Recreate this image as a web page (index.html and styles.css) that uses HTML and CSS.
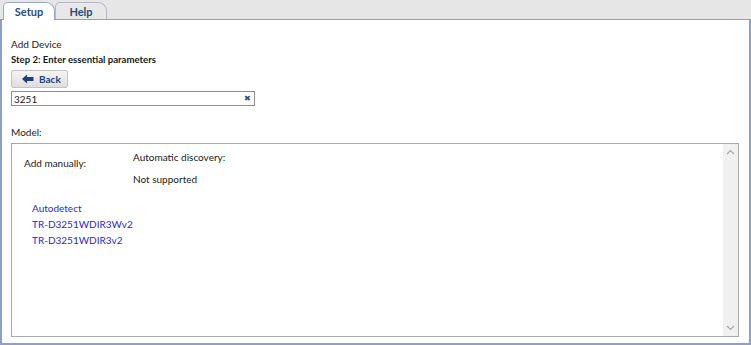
FILE: index.html
```html
<!DOCTYPE html>
<html lang="en">
<head>
    <meta charset="UTF-8">
    <title>Add Device</title>
    <link rel="stylesheet" href="styles.css">
</head>
<body>
    <div class="tabs">
        <div class="tab active">Setup</div>
        <div class="tab">Help</div>
    </div>
    <div class="panel">
        <div class="title">Add Device</div>
        <div class="step">Step 2: Enter essential parameters</div>
        <button class="back-btn" type="button">
            <svg width="12" height="10" viewBox="0 0 12 10"><path d="M0 5 L5 0.5 L5 3 L11.5 3 L11.5 7 L5 7 L5 9.5 Z" fill="#1f3f7a"/></svg>
            Back
        </button>
        <div class="search">
            <input type="text" value="3251">
            <span class="clear">&#x2716;</span>
        </div>

        <div class="model-label">Model:</div>
        <div class="model-box">
            <div class="model-content">
                <div class="cols">
                    <div class="manual">Add manually:</div>
                    <div class="auto">
                        <div>Automatic discovery:</div>
                        <div class="not-supported">Not supported</div>
                    </div>
                </div>
                <div class="links">
                    <a href="#">Autodetect</a>
                    <a href="#">TR-D3251WDIR3Wv2</a>
                    <a href="#">TR-D3251WDIR3v2</a>
                </div>
            </div>
            <div class="scrollbar">
                <svg width="9" height="6" viewBox="0 0 9 6"><path d="M1 5 L4.5 1.5 L8 5" fill="none" stroke="#a6a6a6" stroke-width="1.2"/></svg>
                <svg width="9" height="6" viewBox="0 0 9 6"><path d="M1 1 L4.5 4.5 L8 1" fill="none" stroke="#a6a6a6" stroke-width="1.2"/></svg>
            </div>
        </div>
    </div>
</body>
</html>
```

FILE: styles.css
```css
body {
    margin: 0;
    width: 751px;
    height: 345px;
    background-color: #e6e6e6;
    font-family: Lato, "Open Sans", sans-serif;
    font-size: 10px;
    color: #1a1a1a;
    overflow: hidden;
}

.tabs {
    display: flex;
    height: 19px;
    padding-left: 3px;
    align-items: flex-end;
}

.tab {
    width: 52px;
    height: 17px;
    box-sizing: border-box;
    border: 1px solid #b5b9c4;
    border-bottom: none;
    border-radius: 5px 9px 0 0;
    background-color: #e8e8e8;
    color: #2a4a7c;
    font-weight: bold;
    text-align: center;
    line-height: 17px;
    font-size: 11px;
}

.tab.active {
    background-color: #ffffff;
    height: 18px;
    position: relative;
    top: 1px;
    z-index: 1;
    border-color: #9aa6c4;
}

.panel {
    height: 326px;
    box-sizing: border-box;
    background-color: #ffffff;
    border: 2px solid #8f9fc6;
    border-top-width: 1px;
    padding: 16px 10px 0 9px;
}

.title {
    height: 16px;
    line-height: 16px;
}

.step {
    font-weight: bold;
    font-size: 9.6px;
    height: 16px;
    line-height: 16px;
}

.back-btn {
    display: flex;
    align-items: center;
    gap: 5px;
    margin-top: 2px;
    width: 57px;
    height: 18px;
    padding: 0 0 0 10px;
    border: 1px solid #c4c4c4;
    border-radius: 2px;
    background: linear-gradient(#f4f4f4, #dedede);
    font-family: inherit;
    font-size: 10px;
    font-weight: bold;
    color: #1f3f7a;
}

.search {
    position: relative;
    width: 244px;
    margin-top: 3px;
}

.search input {
    display: block;
    width: 100%;
    height: 15px;
    box-sizing: border-box;
    border: 1px solid #8c8c8c;
    padding: 0 0 0 2px;
    font-family: inherit;
    font-size: 10px;
    color: #1a1a1a;
}

.clear {
    position: absolute;
    right: 4px;
    top: 1px;
    font-size: 8px;
    line-height: 13px;
    color: #2b4f86;
}

.model-label {
    margin-top: 18px;
    height: 16px;
    line-height: 16px;
}

.model-box {
    display: flex;
    margin-top: 3px;
    height: 194px;
    box-sizing: border-box;
    border: 1px solid #a9a9a9;
}

.model-content {
    flex: 1;
}

.cols {
    display: flex;
    padding-top: 6px;
}

.manual {
    width: 109px;
    padding-left: 12px;
    padding-top: 7px;
}

.auto {
    line-height: 15px;
}

.not-supported {
    margin-top: 7px;
}

.links {
    display: flex;
    flex-direction: column;
    padding-left: 20px;
    margin-top: 13px;
    line-height: 16px;
}

.links a {
    color: #2828d8;
    text-decoration: none;
}

.scrollbar {
    width: 15px;
    background-color: #f0f0f0;
    display: flex;
    flex-direction: column;
    justify-content: space-between;
    align-items: center;
    padding: 5px 0;
    box-sizing: border-box;
}
```
